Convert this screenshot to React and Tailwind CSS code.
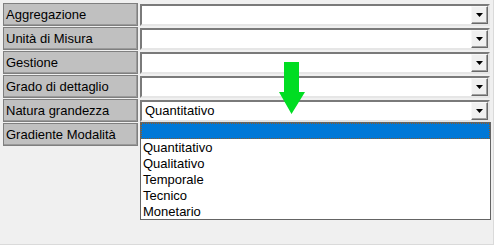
const rows = [
  { label: "Aggregazione", value: "" },
  { label: "Unità di Misura", value: "" },
  { label: "Gestione", value: "" },
  { label: "Grado di dettaglio", value: "" },
  { label: "Natura grandezza", value: "Quantitativo" },
  { label: "Gradiente Modalità", value: "" },
];

const options = ["Quantitativo", "Qualitativo", "Temporale", "Tecnico", "Monetario"];

function DropButton() {
  return (
    <div className="w-[17px] h-full bg-[#f0f0f0] border border-t-[#f8f8f8] border-l-[#f8f8f8] border-b-[#696969] border-r-[#696969] shadow-[inset_-1px_-1px_0_#a0a0a0] flex items-center justify-center">
      <svg width="7" height="4" viewBox="0 0 7 4">
        <path d="M0 0h7L3.5 4z" fill="#000" />
      </svg>
    </div>
  );
}

function Combo({ value, hidden }) {
  return (
    <div className="w-[350px] h-[22px] bg-white border-2 border-t-[#7a7a7a] border-l-[#7a7a7a] border-b-[#e6e6e6] border-r-[#e6e6e6] flex items-stretch">
      <div className="flex-1 pl-[3px] flex items-center text-[13px] text-black">{value}</div>
      {!hidden && <DropButton />}
    </div>
  );
}

export default function App() {
  return (
    <div className="w-[496px] h-[246px] bg-white" style={{ fontFamily: '"Liberation Sans", Arial, sans-serif' }}>
      <div className="relative w-[494px] h-[245px] bg-[#f0f0f0] border-r border-b border-[#dadada] pt-[3px] pl-[3px] flex flex-col gap-[1px]">
        {rows.map((r) => (
          <div key={r.label} className="flex items-center gap-[2px] h-[23px]">
            <div className="w-[135px] h-[23px] bg-[#c0c0c0] border border-[#7f7f7f] shadow-[inset_-1px_-1px_0_#9a9a9a] pl-[2px] flex items-center text-[13px] text-black leading-none">
              {r.label}
            </div>
            <Combo value={r.value} />
          </div>
        ))}

        {/* green arrow */}
        <svg className="absolute left-[279px] top-[62px]" width="27" height="53" viewBox="0 0 27 53">
          <path d="M5 0h15v30h6L12.5 52 0 30h5z" fill="#00dd22" />
        </svg>

        {/* opened list */}
        <div className="absolute left-[140px] top-[122px] w-[351px] bg-white border border-[#646464] flex flex-col text-[13px] text-black">
          <div className="h-[16px] bg-[#0078d7] border border-dotted border-[#8a5a2a]" />
          {options.map((o) => (
            <div key={o} className="h-[16px] pl-[2px] flex items-center leading-none">
              {o}
            </div>
          ))}
        </div>
      </div>
    </div>
  );
}
